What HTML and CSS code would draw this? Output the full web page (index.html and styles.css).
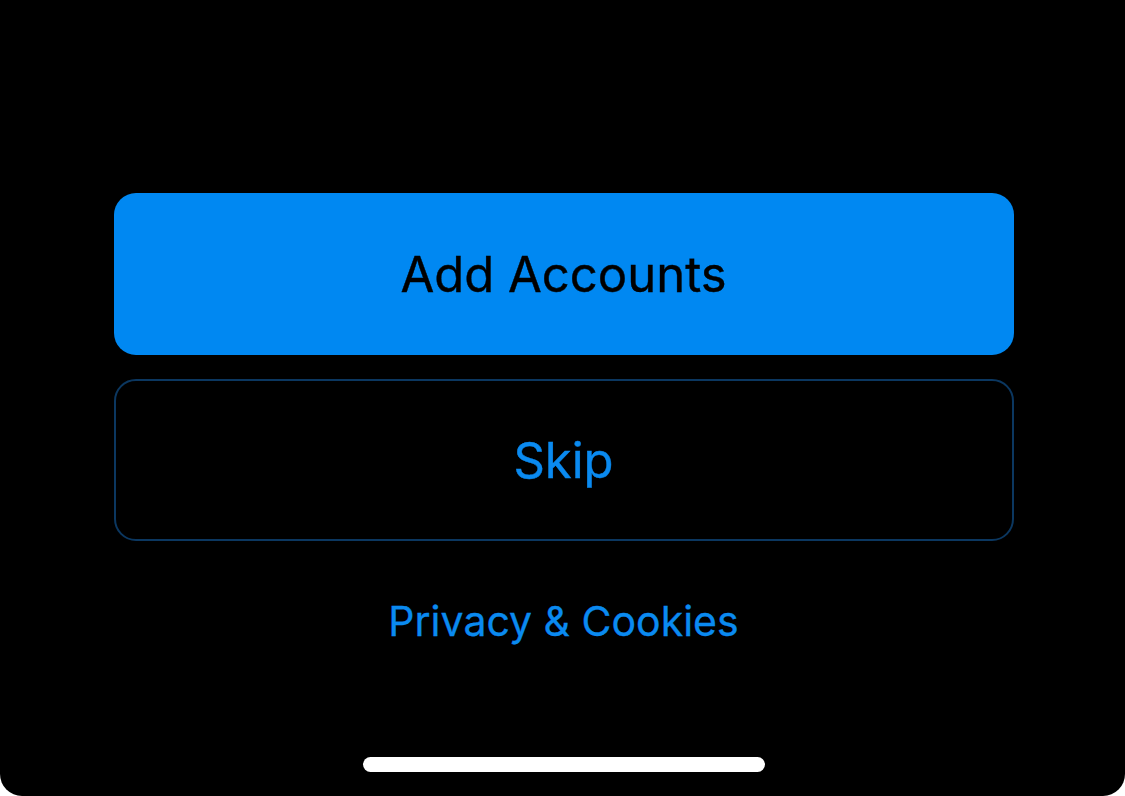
FILE: index.html
```html
<!DOCTYPE html>
<html lang="en">
<head>
    <meta charset="UTF-8">
    <meta name="viewport" content="width=device-width, initial-scale=1.0">
    <title>Add Accounts</title>
    <link rel="stylesheet" href="styles.css">
</head>
<body>
<div class="screen">
    <div class="actions">
        <button class="btn btn-primary">Add Accounts</button>
        <button class="btn btn-outline">Skip</button>
        <a class="link" href="#">Privacy &amp; Cookies</a>
    </div>
    <div class="home-bar"></div>
</div>
</body>
</html>
```

FILE: styles.css
```css
/* Page */
body {
    margin: 0;
    padding: 0;
    background: #ffffff;
    font-family: 'Inter', 'Roboto', sans-serif;
}

.screen {
    width: 1125px;
    height: 796px;
    background: #000;
    border-radius: 0 0 22px 22px;
    display: flex;
    flex-direction: column;
    align-items: center;
    box-sizing: border-box;
    padding-top: 193px;
    padding-left: 2px;
}

/* Buttons */
.actions {
    width: 900px;
    display: flex;
    flex-direction: column;
    align-items: center;
    gap: 24px;
}

.btn {
    width: 100%;
    height: 162px;
    border-radius: 22px;
    font-family: inherit;
    font-size: 49px;
    font-weight: 400;
    cursor: pointer;
    box-sizing: border-box;
    -webkit-text-stroke: 0.4px currentColor;
}

.btn-primary {
    background: #0088f2;
    border: none;
    color: #000;
}

.btn-outline {
    background: #000;
    border: 2px solid #0b3760;
    color: #0a8af0;
}

.link {
    margin-top: 31px;
    font-size: 41px;
    color: #0a8af0;
    text-decoration: none;
    -webkit-text-stroke: 0.3px currentColor;
}

/* Home indicator */
.home-bar {
    margin-top: auto;
    margin-bottom: 24px;
    width: 402px;
    height: 15px;
    border-radius: 8px;
    background: #fff;
}
```
